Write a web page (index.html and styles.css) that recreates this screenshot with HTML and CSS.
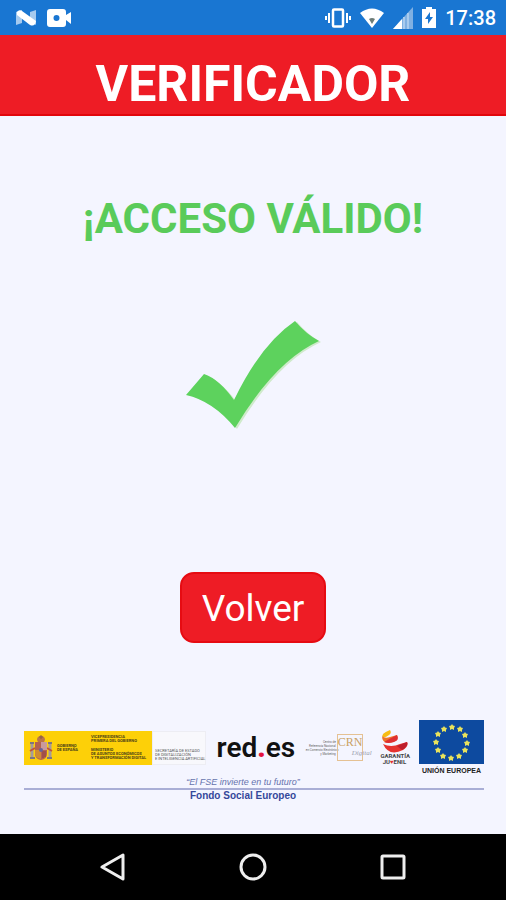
FILE: index.html
```
<!DOCTYPE html>
<html lang="es">
<head>
    <meta charset="UTF-8">
    <meta name="viewport" content="width=device-width, initial-scale=1.0">
    <title>Verificador</title>
    <link rel="stylesheet" href="styles.css">
</head>
<body>
    <!-- Barra de estado -->
    <div class="status-bar">
        <div class="status-left">
            <svg width="20" height="18" viewBox="0 0 20 18">
                <path d="M0 3L6 1V14L0 16Z" fill="#a5caef"/>
                <path d="M14 3L20 1V16L14 12Z" fill="#a5caef"/>
                <path d="M1 3Q3 0 6 2L20 12Q19 18 14 16L1 6Z" fill="#fff"/>
            </svg>
            <svg width="25" height="20" viewBox="0 0 25 20">
                <path fill="#fff" fill-rule="evenodd" d="M3 1H16Q19 1 19 4V7L24 4V16L19 12V16Q19 19 16 19H3Q0 19 0 16V4Q0 1 3 1ZM9.500 7A3 3 0 1 0 9.500 13A3 3 0 1 0 9.500 7Z"/>
            </svg>
        </div>
        <div class="status-right">
            <svg width="26" height="20" viewBox="0 0 26 20" fill="none" stroke="#fff">
                <rect x="8" y="1.500" width="10" height="17" rx="1" stroke-width="2.500"/>
                <path d="M4 5V15M22 5V15" stroke-width="2"/>
                <path d="M1 8V12M25 8V12" stroke-width="2"/>
            </svg>
            <svg width="24" height="20" viewBox="0 0 24 20">
                <path d="M0 5Q12 -4 24 5L12 20Z" fill="#fff"/>
                <path d="M9 11Q12 9 15 11L12 16Z" fill="#6d7c78"/>
            </svg>
            <svg width="20" height="22" viewBox="0 0 20 22">
                <path d="M20 0V22H0Z" fill="#7fb0e2"/>
                <path d="M9 12V22H0Z" fill="#fff"/>
                <path d="M11 10V22M15 6V22" stroke="#a9cbee" stroke-width="2"/>
            </svg>
            <svg width="14" height="21" viewBox="0 0 14 21">
                <path d="M4 0H10V2H14V21H0V2H4Z" fill="#fff"/>
                <path d="M8 5L3 12H6V17L11 10H8Z" fill="#1976d2"/>
            </svg>
            <span class="clock">17:38</span>
        </div>
    </div>

    <header class="app-header">
        <h1>VERIFICADOR</h1>
    </header>

    <main class="content">
        <h2 class="message">¡ACCESO VÁLIDO!</h2>
        <svg class="check" viewBox="0 0 136 110" role="img" aria-label="Válido">
            <path d="M3 75L20 55Q35 60 51 81Q79 26 112 2Q123 15 136 22Q92 42 52 109Q30 82 3 75Z" fill="#cfeacb"/>
            <path d="M1 75L19 54Q34 59 49 80Q76 24 110 1Q121 14 134 21Q90 41 50 108Q28 81 1 75Z" fill="#5dd25d"/>
        </svg>
        <button class="back-button" type="button">Volver</button>
    </main>

    <footer class="sponsors">
        <div class="logos">
            <!-- Gobierno de España -->
            <div class="gov">
                <div class="gov-yellow">
                    <svg width="24" height="26" viewBox="0 0 24 26">
                        <path d="M8 5Q8 1 12 1Q16 1 16 5L15 7H9Z" fill="#b9764b"/>
                        <path d="M12 0V4M10 2H14" stroke="#8b5d49"/>
                        <path d="M3 8V23M21 8V23" stroke="#a69b9a" stroke-width="3"/>
                        <path d="M1 23H6M18 23H23M1 8H5M19 8H23" stroke="#7d7583" stroke-width="2"/>
                        <path d="M1 16L6 13M18 13L23 16" stroke="#c0533f" stroke-width="2"/>
                        <path d="M6 7H18V19Q18 24 12 25Q6 24 6 19Z" fill="#b46250"/>
                        <path d="M12 7H18V15H12Z" fill="#c99a9d"/>
                        <path d="M6 15H12V24Q6 23 6 19Z" fill="#d08b32"/>
                        <path d="M14 16V23M16 16V22" stroke="#8e3e40"/>
                        <circle cx="12" cy="15" r="2" fill="#67619a"/>
                    </svg>
                    <p class="gov-name">GOBIERNO<br>DE ESPAÑA</p>
                    <div class="gov-ministry">
                        <p>VICEPRESIDENCIA<br>PRIMERA DEL GOBIERNO</p>
                        <p>MINISTERIO<br>DE ASUNTOS ECONÓMICOS<br>Y TRANSFORMACIÓN DIGITAL</p>
                    </div>
                </div>
                <p class="gov-office">SECRETARÍA DE ESTADO<br>DE DIGITALIZACIÓN<br>E INTELIGENCIA ARTIFICIAL</p>
            </div>

            <div class="redes">red<span class="dot">.</span>es</div>

            <!-- CRN Digital -->
            <div class="crn">
                <p class="crn-text">Centro de<br>Referencia Nacional<br>en Comercio Electrónico<br>y Marketing</p>
                <div class="crn-box">
                    <span class="crn-name">CRN</span>
                    <span class="crn-digital">Digital</span>
                </div>
            </div>

            <!-- Garantía Juvenil -->
            <div class="youth">
                <svg width="28" height="23" viewBox="0 0 28 23">
                    <path d="M10 0Q12 3 9 5Q5 8 3 7Q0 4 10 0Z" fill="#f7bd14"/>
                    <path d="M2 6Q5 9 10 7L17 5Q19 10 13 12Q2 15 2 6Z" fill="#ee7428"/>
                    <path d="M17 5Q20 10 14 12Q8 14 4 12Q9 9 13 7Z" fill="#df2f31"/>
                    <path d="M3 14Q11 18 20 14L27 12Q29 16 23 20Q9 27 3 14Z" fill="#e6322f"/>
                    <path d="M17 16L27 12Q29 16 22 20Z" fill="#bd1d2c"/>
                </svg>
                <p>GARANTÍA<br>JU<span class="heart">♥</span>ENIL</p>
            </div>

            <!-- Unión Europea -->
            <div class="eu">
                <svg viewBox="0 0 65 44">
                    <defs>
                        <path id="star" d="M0 -3L1 -1.500L3 -1L2 1L2 3L0 2L-2 3L-2 1L-3 -1L-1 -1.500Z"/>
                    </defs>
                    <rect width="65" height="44" fill="#0d4a9f"/>
                    <g fill="#e9e35c">
                        <use href="#star" x="33" y="7"/>
                        <use href="#star" x="41" y="9"/>
                        <use href="#star" x="46" y="15"/>
                        <use href="#star" x="48" y="23"/>
                        <use href="#star" x="46" y="30"/>
                        <use href="#star" x="40" y="36"/>
                        <use href="#star" x="32" y="38"/>
                        <use href="#star" x="24" y="36"/>
                        <use href="#star" x="19" y="30"/>
                        <use href="#star" x="17" y="22"/>
                        <use href="#star" x="19" y="14"/>
                        <use href="#star" x="25" y="9"/>
                    </g>
                </svg>
                <p>UNIÓN EUROPEA</p>
            </div>
        </div>
        <p class="quote">“El FSE invierte en tu futuro”</p>
        <p class="fund">Fondo Social Europeo</p>
    </footer>

    <!-- Botones de navegación -->
    <nav class="nav-bar">
        <button type="button" aria-label="Atrás">
            <svg width="28" height="28" viewBox="0 0 28 28">
                <path d="M24 2V26L3 14Z"/>
            </svg>
        </button>
        <button type="button" aria-label="Inicio">
            <svg width="28" height="28" viewBox="0 0 28 28">
                <circle cx="14" cy="14" r="12"/>
            </svg>
        </button>
        <button type="button" aria-label="Recientes">
            <svg width="28" height="28" viewBox="0 0 28 28">
                <rect x="3" y="3" width="22" height="22" rx="1"/>
            </svg>
        </button>
    </nav>
</body>
</html>
```
FILE: styles.css
```
* {
    box-sizing: border-box;
}

body {
    display: flex;
    flex-direction: column;
    min-height: 100vh;
    margin: 0;
    background-color: #f4f5ff;
    font-family: Roboto, Arial, sans-serif;
}

h1, h2, p {
    margin: 0;
}

svg {
    display: block;
}

/* Barra de estado */
.status-bar {
    display: flex;
    justify-content: space-between;
    align-items: center;
    height: 35px;
    padding: 0 10px 0 16px;
    background-color: #1976d2;
}

.status-left,
.status-right {
    display: flex;
    align-items: center;
    gap: 11px;
}

.status-right {
    gap: 9px;
}

.clock {
    color: #fff;
    font-size: 20px;
    font-weight: 500;
}

.app-header {
    padding: 20px 0 1px;
    background-color: #ee1c25;
    border-bottom: 2px solid #e2060c;
    color: #fff;
    text-align: center;
}

.app-header h1 {
    font-size: 50px;
    line-height: 58px;
    font-weight: 700;
}

/* Resultado */
.content {
    flex: 1;
    display: flex;
    flex-direction: column;
    align-items: center;
    padding-top: 78px;
}

.message {
    color: #5acb5a;
    font-size: 42px;
    line-height: 50px;
    font-weight: 700;
}

.check {
    width: 136px;
    height: 110px;
    margin-top: 76px;
}

.back-button {
    margin-top: 142px;
    padding: 13px 20px 11px;
    border: 2px solid #e60b12;
    border-radius: 14px;
    background-color: #ee1c25;
    color: #fff;
    font-family: inherit;
    font-size: 37px;
    line-height: 43px;
    cursor: pointer;
}

/* Logos */
.sponsors {
    padding: 0 22px 32px 24px;
    text-align: center;
}

.logos {
    display: flex;
    justify-content: space-between;
    align-items: center;
    padding-bottom: 1px;
}

.gov {
    display: flex;
    height: 34px;
    font-size: 4px;
    line-height: 4px;
    text-align: left;
}

.gov-yellow {
    display: flex;
    align-items: center;
    width: 128px;
    padding-left: 5px;
    background-color: #fdd008;
    color: #4d4217;
    font-weight: 700;
    white-space: nowrap;
}

.gov-name {
    width: 38px;
    padding-left: 4px;
}

.gov-ministry {
    display: flex;
    flex-direction: column;
    gap: 5px;
}

.gov-office {
    display: flex;
    align-items: flex-end;
    width: 54px;
    padding: 0 0 3px 2px;
    border: 1px solid #ededf3;
    background-color: #f8f8fc;
    color: #555;
    white-space: nowrap;
}

.redes {
    color: #111;
    font-size: 28px;
    line-height: 34px;
    font-weight: 600;
}

.redes .dot {
    color: #e5123d;
    font-weight: 900;
}

.crn {
    display: flex;
    align-items: center;
    gap: 1px;
    width: 64px;
}

.crn-text {
    width: 30px;
    color: #666;
    font-size: 3px;
    line-height: 4px;
    text-align: right;
    white-space: nowrap;
}

.crn-box {
    display: flex;
    flex-direction: column;
    width: 26px;
    height: 27px;
    border: 1px solid #e5c193;
    font-family: "Liberation Serif", serif;
}

.crn-name {
    color: #c9a164;
    font-size: 12px;
    line-height: 15px;
}

.crn-digital {
    padding-left: 14px;
    color: #9b9fb0;
    font-size: 7px;
    line-height: 7px;
    font-style: italic;
}

.youth {
    width: 28px;
    color: #444;
    font-size: 6px;
    line-height: 6px;
    font-weight: 700;
}

.youth .heart {
    color: #e6322f;
}

.eu {
    width: 65px;
    color: #222;
    font-family: "Liberation Sans", Arial, sans-serif;
    font-size: 7px;
    line-height: 8px;
    font-weight: 700;
    white-space: nowrap;
}

.eu p {
    padding-top: 3px;
}

.quote,
.fund {
    padding-right: 22px;
    color: #6673ad;
    font-family: "Liberation Sans", Arial, sans-serif;
    font-size: 9px;
    line-height: 12px;
}

.quote {
    border-bottom: 2px solid #a9aed6;
    font-style: italic;
}

.fund {
    color: #34489a;
    font-size: 10px;
    font-weight: 700;
}

/* Navegación */
.nav-bar {
    display: flex;
    justify-content: center;
    gap: 112px;
    height: 66px;
    background-color: #000;
}

.nav-bar button {
    padding: 0;
    border: none;
    background: none;
    cursor: pointer;
}

.nav-bar svg {
    fill: none;
    stroke: #eee;
    stroke-width: 3;
    stroke-linejoin: round;
}
```
